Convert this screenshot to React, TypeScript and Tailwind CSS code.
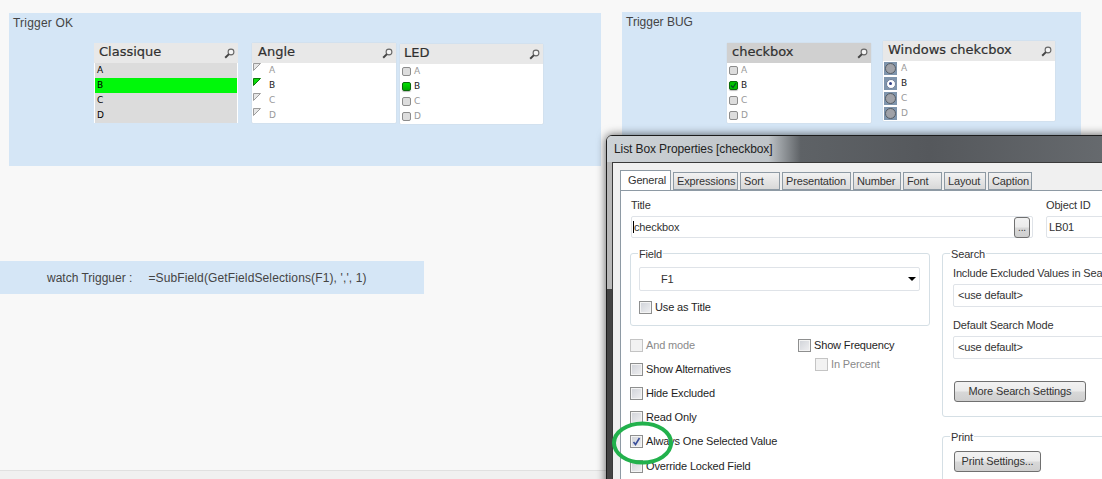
import { ReactNode } from "react";

const UI_FONT = "font-['Liberation_Sans',Arial,sans-serif]";
const HEAD_TEXT =
  "pb-[3px] font-['DejaVu_Sans',sans-serif] text-[13px] leading-none text-[#303030] [-webkit-text-stroke:0.2px_#303030]";

function Lens() {
  return (
    <svg width="11" height="11" viewBox="0 0 11 11" className="shrink-0">
      <circle cx="7" cy="4" r="2.9" fill="#f4f4f4" stroke="#666" strokeWidth="1.1" />
      <path d="M4.9 6.1 L1.2 9.8" stroke="#444" strokeWidth="2" />
    </svg>
  );
}

function Marker({ kind, on }: { kind: string; on: boolean }) {
  if (kind === "angle") {
    return (
      <svg width="8" height="8" viewBox="0 0 8 8" className="mb-[7px] ml-px shrink-0">
        <polygon points="0.5,0.5 7.5,0.5 0.5,7.5" fill={on ? "#0bdc0b" : "#e6e6e6"} stroke={on ? "#0a7a0a" : "#9c9c9c"} strokeWidth="1" />
      </svg>
    );
  }
  if (kind === "led") {
    return (
      <span
        className={
          on
            ? "ml-[2px] size-[9px] shrink-0 rounded-[2px] border border-[#0a6a0a] bg-[linear-gradient(#00e000,#00a800)] shadow-[0_1px_1px_#bbb]"
            : "ml-[2px] size-[9px] shrink-0 rounded-[2px] border border-[#8c8c8c] bg-[#dddddd]"
        }
      />
    );
  }
  if (kind === "check") {
    return (
      <span
        className={
          on
            ? "ml-[2px] flex size-[9px] shrink-0 items-center justify-center rounded-[2px] border border-[#0a6a0a] bg-[#00c000] shadow-[0_1px_1px_#bbb]"
            : "ml-[2px] size-[9px] shrink-0 rounded-[2px] border border-[#8c8c8c] bg-[#dddddd]"
        }
      >
        {on ? (
          <svg width="7" height="7" viewBox="0 0 7 7">
            <path d="M1 3.5 L3 5.5 L6 1" stroke="#052" strokeWidth="1.3" fill="none" />
          </svg>
        ) : null}
      </span>
    );
  }
  // windows style radio
  return (
    <span className="ml-[1px] flex size-[13px] shrink-0 items-center justify-center bg-[#7f95ad]">
      <span
        className={
          on
            ? "flex size-[10px] items-center justify-center rounded-full border border-[#6f7f99] bg-white"
            : "size-[11px] rounded-full border border-[#555d66] bg-[#a0a2a8]"
        }
      >
        {on ? <span className="size-[3px] rounded-full bg-[#34438a]" /> : null}
      </span>
    </span>
  );
}

function ListBox({
  title,
  kind,
  className,
  headClass = "bg-[#e8e8e8] pl-[5px]",
  textIndent = "gap-[3px]",
}: {
  title: string;
  kind: string;
  className: string;
  headClass?: string;
  textIndent?: string;
}) {
  return (
    <div className={`flex shrink-0 flex-col rounded-[1px] bg-white shadow-[0_0_1px_#bbb] ${className}`}>
      <div className={`flex h-[20px] items-center justify-between pr-[3px] ${headClass}`}>
        <span className={HEAD_TEXT}>{title}</span>
        <Lens />
      </div>
      {["A", "B", "C", "D"].map((v) => (
        <div key={v} className={`flex h-[15px] items-center font-['DejaVu_Sans',sans-serif] text-[9px] ${textIndent}`}>
          <Marker kind={kind} on={v === "B"} />
          <span className={v === "B" ? "text-[#222]" : "text-[#999]"}>{v}</span>
        </div>
      ))}
    </div>
  );
}

function ClassicListBox() {
  return (
    <div className="flex h-[80px] w-[144px] shrink-0 flex-col bg-white">
      <div className="flex h-[20px] items-center justify-between bg-[#e8e8e8] pr-[3px] pl-[5px]">
        <span className={HEAD_TEXT}>Classique</span>
        <Lens />
      </div>
      {["A", "B", "C", "D"].map((v) => (
        <div
          key={v}
          className={
            v === "B"
              ? "mx-px flex h-[15px] items-center bg-[#00f80a] pl-[2px] font-['DejaVu_Sans',sans-serif] text-[9px] text-black"
              : "mx-px flex h-[15px] items-center bg-[#dcdcdc] pl-[2px] font-['DejaVu_Sans',sans-serif] text-[9px] text-black"
          }
        >
          {v}
        </div>
      ))}
    </div>
  );
}

function Box({ label, checked, disabled, className = "" }: { label: string; checked?: boolean; disabled?: boolean; className?: string }) {
  return (
    <div className={`flex h-[14px] items-center gap-[3px] ${className}`}>
      <span
        className={
          disabled
            ? "flex size-[13px] shrink-0 items-center justify-center border border-[#c4c4c4] bg-[#f2f2f2]"
            : "flex size-[13px] shrink-0 items-center justify-center border border-[#8e8f8f] bg-[linear-gradient(135deg,#cfd2d8,#f0f0f2)] shadow-[inset_0_0_0_1px_#f4f4f4]"
        }
      >
        {checked ? (
          <svg width="9" height="9" viewBox="0 0 9 9">
            <path d="M1.5 5 L3.5 7.5 L7.5 1" stroke="#3a4f9a" strokeWidth="1.6" fill="none" />
          </svg>
        ) : null}
      </span>
      <span className={disabled ? "text-[#8a8a8a]" : "text-[#1e1e1e]"}>{label}</span>
    </div>
  );
}

function Group({ label, className, children }: { label: string; className: string; children: ReactNode }) {
  return (
    <div className={`rounded-[3px] border border-[#d5dfe5] ${className}`}>
      <div className="-mt-[7px] h-[14px] w-fit bg-white px-px leading-[15px]">{label}</div>
      {children}
    </div>
  );
}

function Field({ className, children, arrow }: { className: string; children: ReactNode; arrow?: boolean }) {
  return (
    <div className={`flex items-center justify-between rounded-[2px] border border-[#dfe3e8] bg-white ${className}`}>
      {children}
      {arrow ? <span className="border-x-[4px] border-t-[4px] border-x-transparent border-t-black" /> : null}
    </div>
  );
}

function PushButton({ className, children }: { className: string; children: ReactNode }) {
  return (
    <div className={`flex h-[21px] items-center justify-center rounded-[3px] border border-[#707070] bg-[linear-gradient(#f2f2f2_0%,#ebebeb_48%,#d8d8d8_52%,#cfcfcf_100%)] ${className}`}>
      {children}
    </div>
  );
}

function Tab({ label, w, active }: { label: string; w: string; active?: boolean }) {
  return (
    <div
      className={
        active
          ? `-mb-px flex h-[21px] items-center border border-b-0 border-[#8e9aa4] bg-white pb-[2px] pl-[7px] ${w}`
          : `flex h-[18px] items-center border border-[#8e9aa4] bg-[linear-gradient(#f2f2f2,#d8d8d8)] pl-[3px] ${w}`
      }
    >
      {label}
    </div>
  );
}

function Dialog() {
  return (
    <div className={`absolute top-[135px] left-[606px] flex h-[400px] w-[540px] flex-col rounded-t-[6px] border border-[#1c1c1c] text-[11px] tracking-[-0.15px] shadow-[0_0_10px_rgba(0,0,0,0.65)] ${UI_FONT}`}>
      <div className="flex h-[26px] shrink-0 items-center rounded-t-[5px] bg-[linear-gradient(90deg,#cdd2d6_0%,#bfc4c8_30%,#5e6266_36%,#55585c_60%,#6a6e72_100%)] pl-[7px] text-[12px] tracking-[-0.1px] text-[#222]">
        List Box Properties [checkbox]
      </div>
      <div className="flex flex-1">
        <div className="w-[5px] shrink-0 bg-[linear-gradient(#b8b8b8_127px,#444_127px)]" />
        <div className="flex flex-1 flex-col border border-[#3a3a3a] bg-[#f0f0f0] pt-[7px] pl-[7px]">
          <div className="flex items-end gap-[2px]">
            <Tab label="General" w="w-[51px]" active />
            <Tab label="Expressions" w="w-[65px]" />
            <Tab label="Sort" w="w-[40px]" />
            <Tab label="Presentation" w="w-[69px]" />
            <Tab label="Number" w="w-[48px]" />
            <Tab label="Font" w="w-[39px]" />
            <Tab label="Layout" w="w-[42px]" />
            <Tab label="Caption" w="w-[44px]" />
          </div>
          <div className="flex-1 border-t border-l border-[#8e9aa4] bg-white pt-[8px] pl-[9px]">
            <div className="ml-px flex gap-[13px]">
              <div className="w-[402px] shrink-0">
                <div className="h-[17px] leading-[12px]">Title</div>
                <Field className="h-[22px] border-[#7da2ce] pr-[2px] pl-px">
                  <span>
                    <span className="border-l border-black">c</span>heckbox
                  </span>
                  <PushButton className="h-[17px] w-[16px] text-[10px]">...</PushButton>
                </Field>
              </div>
              <div className="w-[100px] shrink-0">
                <div className="h-[17px] leading-[12px]">Object ID</div>
                <Field className="h-[22px] pl-[2px]">LB01</Field>
              </div>
            </div>
            <div className="mt-[15px] flex">
              <div className="w-[300px] shrink-0">
                <Group label="Field" className="h-[73px] pr-[9px] pl-[7px]">
                  <Field arrow className="mt-[6px] ml-px h-[24px] pr-[3px] pl-[21px]">F1</Field>
                  <Box label="Use as Title" className="mt-[9px] ml-px" />
                </Group>
                <div className="mt-[12px] flex">
                  <div className="w-[168px] shrink-0">
                    <Box label="And mode" disabled />
                    <Box label="Show Alternatives" className="mt-[10px]" />
                    <Box label="Hide Excluded" className="mt-[10px]" />
                    <Box label="Read Only" className="mt-[10px]" />
                    <Box label="Always One Selected Value" checked className="mt-[10px]" />
                    <Box label="Override Locked Field" className="mt-[11px]" />
                  </div>
                  <div>
                    <Box label="Show Frequency" />
                    <Box label="In Percent" disabled className="mt-[5px] ml-[17px]" />
                  </div>
                </div>
              </div>
              <div className="ml-[12px] w-[220px] shrink-0">
                <Group label="Search" className="h-[164px] pl-[7px]">
                  <div className="mt-[4px] ml-[3px] h-[16px] leading-[16px] whitespace-nowrap">Include Excluded Values in Search</div>
                  <Field className="mt-[3px] ml-[3px] h-[23px] pl-[4px]">&lt;use default&gt;</Field>
                  <div className="mt-[10px] ml-[3px] h-[16px] leading-[16px]">Default Search Mode</div>
                  <Field className="mt-[3px] ml-[3px] h-[23px] pl-[4px]">&lt;use default&gt;</Field>
                  <PushButton className="mt-[22px] ml-[4px] w-[132px]">More Search Settings</PushButton>
                </Group>
                <Group label="Print" className="mt-[19px] h-[80px] pl-[7px]">
                  <PushButton className="mt-[7px] ml-[4px] w-[87px]">Print Settings...</PushButton>
                </Group>
              </div>
            </div>
          </div>
        </div>
      </div>
    </div>
  );
}

export default function App() {
  return (
    <div className={`relative h-[479px] w-[1102px] overflow-hidden bg-[#f8f8f8] text-[#333] ${UI_FONT}`}>
      <div className="flex items-start">
        <section className="mt-[13px] ml-[9px] h-[153px] w-[592px] bg-[#d5e6f6] pt-px pl-[4px] text-[12px]">
          <div className="h-[29px] tracking-[0.2px] text-[#444]">Trigger OK</div>
          <div className="ml-[81px] flex items-start">
            <ClassicListBox />
            <ListBox title="Angle" kind="angle" headClass="bg-[#e8e8e8] pl-[6px]" className="ml-[14px] h-[80px] w-[144px]" textIndent="gap-[8px]" />
            <ListBox title="LED" kind="led" headClass="bg-[#e8e8e8] pl-[4px]" className="mt-px ml-[4px] h-[80px] w-[143px]" />
          </div>
        </section>
        <section className="mt-[12px] ml-[21px] h-[130px] w-[459px] bg-[#d5e6f6] pt-px pl-[4px] text-[12px]">
          <div className="h-[30px] text-[#444]">Trigger BUG</div>
          <div className="ml-[101px] flex items-start">
            <ListBox title="checkbox" kind="check" headClass="bg-[#d0d0d0] pl-[5px]" className="h-[80px] w-[144px]" />
            <ListBox title="Windows chekcbox" kind="radio" className="-mt-[2px] ml-[12px] h-[80px] w-[172px]" textIndent="gap-[4px]" />
          </div>
        </section>
      </div>
      <div className="mt-[95px] flex h-[33px] w-[424px] items-center bg-[#d5e6f6] pl-[47px] text-[12px] text-[#444]">
        <span>watch Trigguer :</span>
        <span className="ml-[16px] tracking-[0.13px]">=SubField(GetFieldSelections(F1), ',', 1)</span>
      </div>
      <div className="mt-[176px] h-[9px] border-t border-[#e0e0e0] bg-[#f0f0f0]" />
      <Dialog />
      <svg width="70" height="50" viewBox="0 0 70 50" className="absolute top-[418px] left-[608px]">
        <ellipse cx="34.5" cy="25" rx="28.5" ry="19.5" fill="none" stroke="#22b14c" strokeWidth="4" />
      </svg>
    </div>
  );
}
